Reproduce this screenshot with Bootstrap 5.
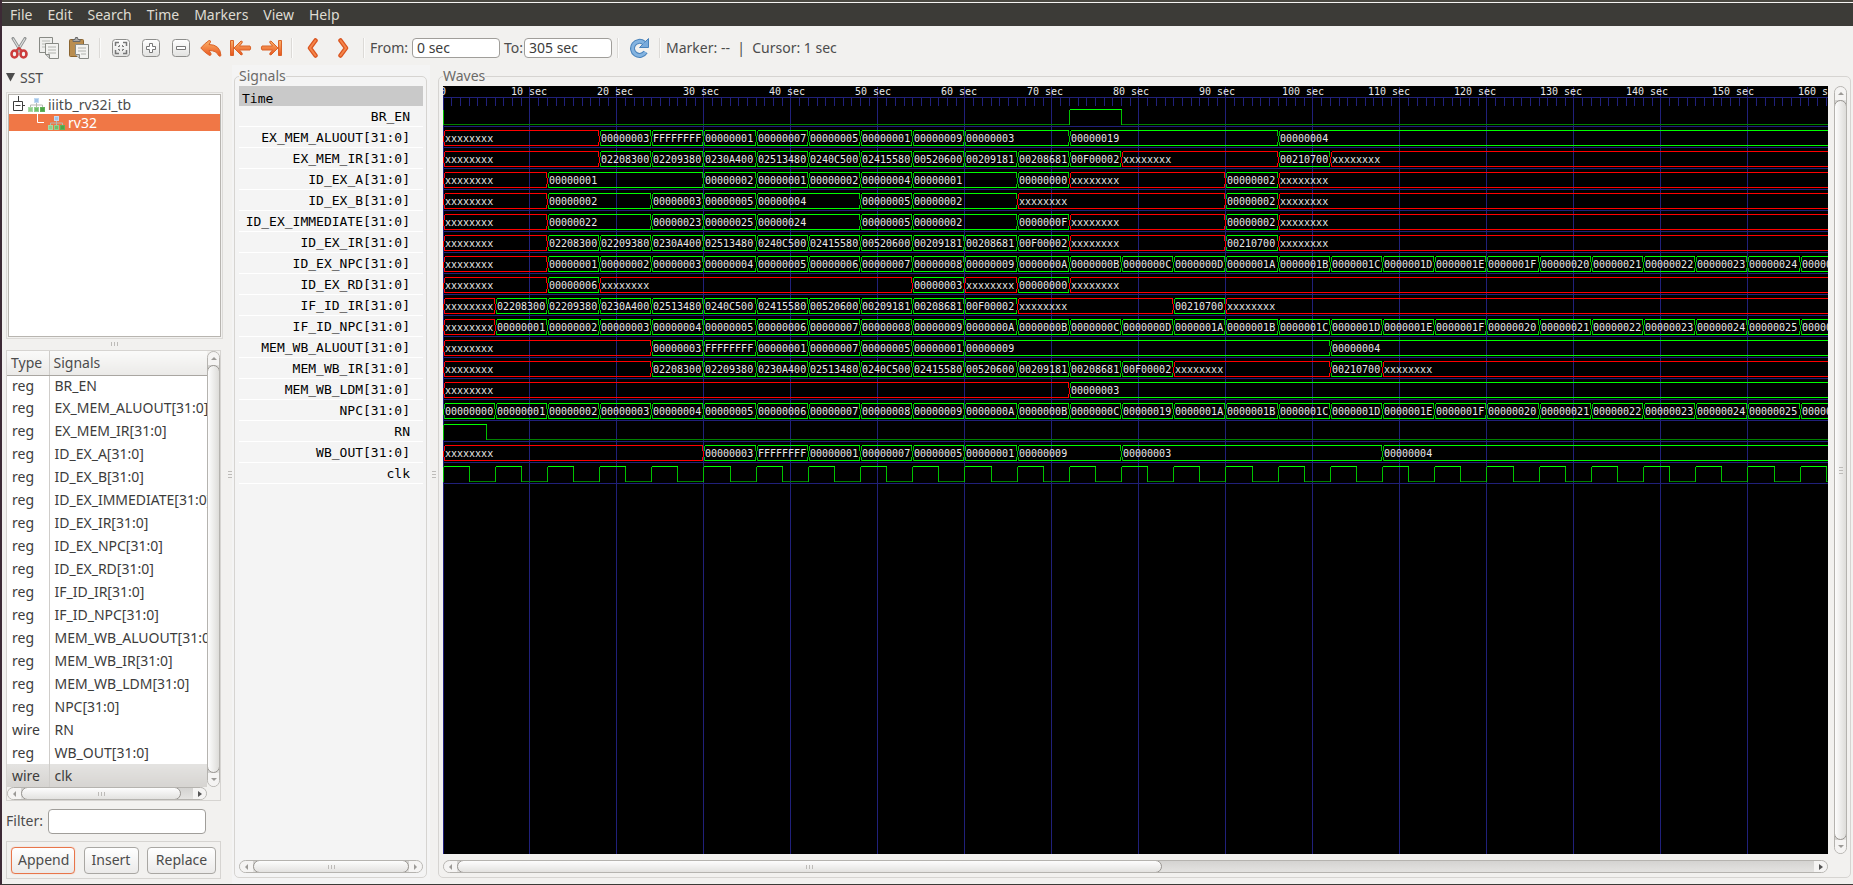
<!DOCTYPE html>
<html lang="en">
<head>
<meta charset="utf-8">
<meta name="viewport" content="width=device-width, initial-scale=1">
<title>GTKWave</title>
<link href="https://cdn.jsdelivr.net/npm/bootstrap@5.3.0/dist/css/bootstrap.min.css" rel="stylesheet">
<style>
:root{--panel:#f2f1ef;--edge:#d6d4d1;--ink:#4c4c4c}
body{font-family:"Noto Sans",sans-serif;font-size:14px;line-height:20px;color:var(--ink);background:var(--panel);border-left:2px solid #3d2a36;border-bottom:1px solid #3c3b37;overflow:hidden}
.titlestrip{height:3px;background:#4b4942;border-bottom:1px solid #f5f4f2}
.menubar{height:23px;background:#3c3b37;padding-left:1px;gap:1px}
.menubar a{color:#dfdbd2;text-decoration:none;padding:0 7px;line-height:24px}
.toolbar{height:39px;padding:5px 0 0 2px}
.tool{width:30px;height:30px;border:0;background:none;padding:0;display:flex;align-items:center;justify-content:center}
.tsep{width:12px;height:20px;display:flex;justify-content:center}
.tsep::before{content:"";width:2px;background:#dcdad7;border-right:1px solid #fbfbfa}
.entry{border:1px solid #a09e9a;border-radius:4px;background:#fff;color:#3c3c3c;padding:0 4px;height:20px;width:88px;outline:0}
.leftpane{width:226px;padding:0 6px 5px 4px}
.sst{height:26px;padding-bottom:1px}
.tree{height:243px;background:#fff;border:1px solid #b8b5b0;outline:1px solid #dddbd8;outline-offset:1px;margin:3px 1px 1px 2px}
.tree .node{height:19px;line-height:19px;padding-left:3px;gap:3px}
.tree .node.sel{background:#f07746;color:#fff;height:17px;line-height:17px}
.grip{display:flex;gap:2px;justify-content:center;align-items:center}
.grip i{width:1px;height:4px;background:#bdbbb8}
.grip.vert{flex-direction:column}
.grip.vert i{width:4px;height:1px}
.siglist{height:451px;border:1px solid var(--edge);margin-right:1px;overflow:hidden}
.siglist table{width:100%;table-layout:fixed;border-collapse:collapse;background:#fff;color:#3c3c3c}
.siglist td,.siglist th{height:23px;padding:0 0 0 5px;line-height:20px;white-space:nowrap;overflow:hidden;font-weight:400}
.siglist th{height:24px;background:linear-gradient(#fafaf9,#ebeae8);border-bottom:1px solid #a9a6a1;color:var(--ink);padding-left:4px}
.siglist th:first-child,.siglist td:first-child{width:42px;border-right:1px solid #cfcdca}
.siglist tbody tr:first-child td{height:21px;line-height:19px}
.siglist tr.cur td{background:linear-gradient(#e4e3e1,#d6d4d1)}
.bar{display:flex;background:linear-gradient(#d4d3d1,#e4e3e1);border:1px solid #b5b3af;border-radius:7px;overflow:hidden;flex:none}
.bar.h{height:13px;width:100%}
.bar.v{width:13px;flex-direction:column;background:linear-gradient(90deg,#d4d3d1,#e4e3e1)}
.bar button{border:0;padding:0;background:#f5f4f3;width:13px;height:11px;flex:none;display:flex;align-items:center;justify-content:center}
.bar.v button{width:11px;height:13px}
.bar button svg{fill:#9c9a97}
.bar .thumb{border:1px solid #989591;border-radius:7px;margin:-1px 0;background:linear-gradient(#fdfdfd,#e3e2e0)}
.bar.v .thumb{margin:0 -1px;background:linear-gradient(90deg,#fdfdfd,#dddcd9)}
.filter{height:40px}
.filter .entry{width:158px;height:25px}
.actions{border:1px solid var(--edge);height:38px;padding:0 4px;margin-right:1px}
.actions button{height:27px;border:1px solid #a9a7a3;border-radius:4px;background:linear-gradient(#fff,#ebeae9);color:var(--ink);padding:0 6px}
.actions button.def{border-color:#e8754a;box-shadow:0 0 1px #f19a78}
.actions .w1{width:64px}.actions .w2{width:55px}.actions .w3{width:69px}
.sigpane{width:198px;background:#f4f4f4;padding:11px 3px 6px 2px}
.wavepane{padding:11px 2px 6px 0}
.group{border:1px solid var(--edge);border-radius:5px;padding:0 3px 4px 4px}
.group h2{font-size:14px;line-height:21px;height:21px;margin:-12px 0 0;align-self:flex-start;color:#6b6a68;font-weight:400}
.sigpane h2{background:#f4f4f4}.wavepane h2{background:var(--panel)}
.names{font:13px/19px "DejaVu Sans Mono",monospace;color:#000;margin:0}
.names li{height:21px;padding:1px 13px 0 0;text-align:right;border-bottom:1px solid #fff;white-space:nowrap}
.names li:first-child{height:20px;background:#c9c9c9;text-align:left;padding:3px 0 0 3px;border:0}
.canvas{background:#000;flex:1 1 0;min-width:0;display:block;font:10px "DejaVu Sans Mono",monospace}
.canvas text{fill:#e9e9e9;white-space:pre}
.canvas path{fill:none;stroke-width:1;shape-rendering:crispEdges}
</style>
<script src="https://cdn.jsdelivr.net/npm/bootstrap@5.3.0/dist/js/bootstrap.bundle.min.js"></script>
</head>
<body class="vh-100 d-flex flex-column">
<svg width="0" height="0" class="position-absolute">
  <defs>
    <linearGradient id="og" x1="0" y1="0" x2="0" y2="1"><stop offset="0" stop-color="#fbb36a"/><stop offset="1" stop-color="#e9531d"/></linearGradient>
    <linearGradient id="bg" x1="0" y1="0" x2="0" y2="1"><stop offset="0" stop-color="#fff"/><stop offset="1" stop-color="#e2e2e0"/></linearGradient>
    <symbol id="net" viewBox="0 0 17 14">
      <path d="M8.500 4v3M2.500 9V7h12v2M8.500 7v2" fill="none" stroke="#b5b8b4"/>
      <rect x="6.500" y=".5" width="4" height="4" fill="#9fc4ea" stroke="#c3daf2"/>
      <rect x=".5" y="9.500" width="4" height="4" fill="#8fd08a" stroke="#a9d9a5"/>
      <rect x="6.500" y="9.500" width="4" height="4" fill="#6fbf6a" stroke="#93cf8f"/>
      <rect x="12.500" y="9.500" width="4" height="4" fill="#4ea548" stroke="#5fb159"/>
    </symbol>
  </defs>
</svg>

<div class="titlestrip flex-shrink-0"></div>
<nav class="menubar d-flex flex-shrink-0" aria-label="Main menu">
  <a href="#">File</a><a href="#">Edit</a><a href="#">Search</a><a href="#">Time</a><a href="#">Markers</a><a href="#">View</a><a href="#">Help</a>
</nav>

<div class="toolbar d-flex align-items-center flex-shrink-0">
  <button class="tool" aria-label="Cut"><svg width="18" height="22"><path d="M3 1.500l8 13M15 1.500l-8 13" stroke="#8e9090" stroke-width="3" stroke-linecap="round"/><path d="M3 1.500l8 13M15 1.500l-8 13" stroke="#dfe1e0" stroke-width="1.200"/><ellipse cx="4.500" cy="17" rx="3" ry="3.500" fill="none" stroke="#cc3b3b" stroke-width="2.600"/><ellipse cx="13.500" cy="17" rx="3" ry="3.500" fill="none" stroke="#cc3b3b" stroke-width="2.600"/><path d="M6 14l3-3 3 3" fill="none" stroke="#cc3b3b" stroke-width="2"/></svg></button>
  <button class="tool" aria-label="Copy"><svg width="20" height="22"><path d="M.5.500h13v15H.5z" fill="#eeeeec" stroke="#888a85"/><path d="M3 4h8M3 7h8M3 10h5" stroke="#b9bbb6"/><path d="M6.500 6.500h13v15h-9l-4-4z" fill="#f3f3f1" stroke="#888a85"/><path d="M9 10h8M9 13h8M9 16h8" stroke="#b0b2ad"/><path d="M6.500 17.500h4v4" fill="#ccc" stroke="#888a85"/></svg></button>
  <button class="tool" aria-label="Paste"><svg width="20" height="22"><rect x=".5" y="2.500" width="14" height="17" rx="1" fill="#b98d4f" stroke="#8b6530"/><path d="M4 4.500V2.500h2L6.500.500h2l.5 2h2v2z" fill="#aaa" stroke="#666"/><path d="M6.500 7.500h13v14h-9l-4-4z" fill="#f3f3f1" stroke="#888a85"/><path d="M9 11h8M9 14h8M12 17h5" stroke="#b0b2ad"/><path d="M6.500 17.500h4v4" fill="#ccc" stroke="#888a85"/></svg></button>
  <span class="tsep"></span>
  <button class="tool" aria-label="Zoom fit"><svg width="18" height="18"><rect x=".5" y=".5" width="17" height="17" rx="3" fill="url(#bg)" stroke="#8e8e8c"/><path d="M7 3.500H3.500V7M11 3.500h3.500V7M7 14.500H3.500V11M11 14.500h3.500V11" fill="none" stroke="#777" stroke-width="1.500"/><path d="M7.500 6v1.500H6M10.500 6v1.500H12M7.500 12v-1.500H6M10.500 12v-1.500H12" fill="none" stroke="#777"/></svg></button>
  <button class="tool" aria-label="Zoom in"><svg width="18" height="18"><rect x=".5" y=".5" width="17" height="17" rx="3" fill="url(#bg)" stroke="#8e8e8c"/><path d="M7.500 4.500h3v3h3v3h-3v3h-3v-3h-3v-3h3z" fill="#fff" stroke="#777"/></svg></button>
  <button class="tool" aria-label="Zoom out"><svg width="18" height="18"><rect x=".5" y=".5" width="17" height="17" rx="3" fill="url(#bg)" stroke="#8e8e8c"/><path d="M4.500 7.500h9v3h-9z" fill="#fff" stroke="#777"/></svg></button>
  <button class="tool" aria-label="Undo zoom"><svg width="22" height="18"><path d="M9 1.500Q11 1.500 10.500 3L9 5.500q11 0 12 11-1 1.500-2.500 0-2-5-9.500-5l2 3q.5 2-1.500 2Q4 13 .800 9 4 5 9 1.500z" fill="url(#og)" stroke="#d9642a"/></svg></button>
  <button class="tool" aria-label="To start"><svg width="22" height="18"><path d="M.5 1.500h3v15h-3zM11 2q2 0 1 2L9.500 7H20q1.500 2 0 4H9.500l2.500 3q1 2-1 2L4 9z" fill="url(#og)" stroke="#d9642a"/></svg></button>
  <button class="tool" aria-label="To end"><svg width="22" height="18"><path d="M18.500 1.500h3v15h-3zM11 2q-2 0-1 2l2.500 3H2Q.500 9 2 11h10.500L10 14q-1 2 1 2l7-7z" fill="url(#og)" stroke="#d9642a"/></svg></button>
  <span class="tsep"></span>
  <button class="tool" aria-label="Previous edge"><svg width="12" height="20"><path d="M8.500 2.500L3 10l5.500 7.500" fill="none" stroke="#d9541f" stroke-width="4.500" stroke-linecap="round" stroke-linejoin="round"/><path d="M8.500 2.500L3 10l5.500 7.500" fill="none" stroke="#f5854a" stroke-width="2" stroke-linecap="round"/></svg></button>
  <button class="tool" aria-label="Next edge"><svg width="12" height="20"><path d="M3.500 2.500L9 10l-5.500 7.500" fill="none" stroke="#d9541f" stroke-width="4.500" stroke-linecap="round" stroke-linejoin="round"/><path d="M3.500 2.500L9 10l-5.500 7.500" fill="none" stroke="#f5854a" stroke-width="2" stroke-linecap="round"/></svg></button>
  <span class="tsep"></span>
  <label for="from" style="width:42px">From:</label><input id="from" class="entry" value="0 sec">
  <label for="to" class="ms-1" style="width:20px">To:</label><input id="to" class="entry" value="305 sec">
  <span class="tsep"></span>
  <button class="tool" aria-label="Reload"><svg width="20" height="20"><path d="M15 5a7 7 0 1 0 1.500 9" fill="none" stroke="#4a83bb" stroke-width="5"/><path d="M19.500.500v9h-9z" fill="#78aadb" stroke="#4a83bb"/><path d="M15 5a7 7 0 1 0 1.500 9" fill="none" stroke="#83b3e0" stroke-width="3"/></svg></button>
  <span class="tsep"></span>
  <span style="white-space:pre">Marker: --  |  Cursor: 1 sec</span>
</div>

<main class="d-flex flex-grow-1" style="min-height:0">
  <aside class="leftpane flex-shrink-0 d-flex flex-column">
    <div class="sst d-flex align-items-center"><svg width="10" height="9" class="me-1"><path d="M0 0h9L4.500 8.500z" fill="#4c4c4c"/></svg>SST</div>
    <div class="tree flex-shrink-0">
      <div class="node d-flex align-items-center"><svg width="13" height="19"><path d="M6.500 1v5M1.500 6.500h9v9h-9zM3.500 10.500h5M10.500 10.500H13" fill="none" stroke="#3c3c3c"/></svg><svg width="17" height="14"><use href="#net"/></svg>iiitb_rv32i_tb</div>
      <div class="node sel d-flex align-items-center"><svg width="33" height="17"><path d="M25.500 0v8.500H32" fill="none" stroke="#fff"/></svg><svg width="17" height="14"><use href="#net"/></svg>rv32</div>
    </div>
    <div class="grip flex-shrink-0" style="height:12px"><i></i><i></i><i></i></div>
    <div class="siglist d-flex flex-column flex-shrink-0">
      <div class="d-flex flex-grow-1">
        <div class="flex-grow-1 overflow-hidden">
          <table>
            <thead><tr><th>Type</th><th>Signals</th></tr></thead>
            <tbody id="rows"></tbody>
          </table>
        </div>
        <div class="bar v"><button aria-label="Up"><svg width="6" height="3"><path d="M0 3l3-3 3 3z"/></svg></button><div class="thumb flex-grow-1"></div><button aria-label="Down"><svg width="6" height="3"><path d="M0 0l3 3 3-3z"/></svg></button></div>
      </div>
      <div style="padding-right:13px"><div class="bar h"><button aria-label="Left"><svg width="3" height="6"><path d="M3 0L0 3l3 3z"/></svg></button><div class="thumb grip" style="width:81%"><i></i><i></i><i></i></div><button class="ms-auto" aria-label="Right"><svg width="4" height="6"><path fill="#555" d="M0 0l4 3-4 3z"/></svg></button></div></div>
    </div>
    <div class="filter d-flex align-items-center flex-shrink-0"><label for="filter" style="width:42px">Filter:</label><input id="filter" class="entry"></div>
    <div class="actions d-flex align-items-center justify-content-between flex-shrink-0"><button class="def w1">Append</button><button class="w2">Insert</button><button class="w3">Replace</button></div>
  </aside>
  <div class="grip vert flex-shrink-0" style="width:4px"><i></i><i></i><i></i></div>
  <section class="sigpane flex-shrink-0 d-flex flex-column">
    <div class="group flex-grow-1 d-flex flex-column">
      <h2>Signals</h2>
      <ul class="names list-unstyled flex-grow-1" id="names"><li>Time</li></ul>
      <div class="bar h"><button aria-label="Left"><svg width="3" height="6"><path d="M3 0L0 3l3 3z"/></svg></button><div class="thumb grip flex-grow-1"><i></i><i></i><i></i></div><button aria-label="Right"><svg width="3" height="6"><path d="M0 0l3 3-3 3z"/></svg></button></div>
    </div>
  </section>
  <div class="grip vert flex-shrink-0" style="width:8px"><i></i><i></i><i></i></div>
  <section class="wavepane flex-grow-1 d-flex flex-column" style="min-width:0">
    <div class="group flex-grow-1 d-flex flex-column">
      <h2>Waves</h2>
      <div class="d-flex flex-grow-1" style="gap:6px">
        <svg class="canvas" id="waves" role="img" aria-label="Waveforms"></svg>
        <div class="bar v"><button aria-label="Up"><svg width="6" height="3"><path d="M0 3l3-3 3 3z"/></svg></button><div class="thumb grip vert flex-grow-1"><i></i><i></i><i></i></div><button aria-label="Down"><svg width="6" height="3"><path d="M0 0l3 3 3-3z"/></svg></button></div>
      </div>
      <div style="padding:6px 19px 0 0"><div class="bar h"><button aria-label="Left"><svg width="3" height="6"><path d="M3 0L0 3l3 3z"/></svg></button><div class="thumb grip" style="width:51%"><i></i><i></i><i></i></div><button class="ms-auto" aria-label="Right"><svg width="4" height="6"><path fill="#555" d="M0 0l4 3-4 3z"/></svg></button></div></div>
    </div>
  </section>
</main>

<script>
const X = 'xxxxxxxx';
const instr = ['02208300','02209380','0230A400','02513480','0240C500','02415580','00520600','00209181','00208681','00F00002'];
// "cell:value" pairs; one cell is one clock period of 6 sec
const vals = s => s.split(' ').map(p => { const [k, v] = p.split(':'); return [+k, v === 'x' ? X : v.padStart(8, '0')]; });
const program = (start, again) => [[0, X], ...instr.map((v, i) => [start + i, v]), [start + 10, X], [again, '00210700'], [again + 1, X]];
const count = (start, from, jump, to) => { const r = []; let n = from; for (let k = start; k < 27; k++) { if (k === jump) n = to; r.push([k, n.toString(16).toUpperCase().padStart(8, '0')]); n++; } return r; };
const signals = [
  ['reg', 'BR_EN', 'bit', [[72, 78]]],
  ['reg', 'EX_MEM_ALUOUT[31:0]', 'bus', vals('0:x 3:3 4:FFFFFFFF 5:1 6:7 7:5 8:1 9:9 10:3 12:19 16:4')],
  ['reg', 'EX_MEM_IR[31:0]', 'bus', program(3, 16)],
  ['reg', 'ID_EX_A[31:0]', 'bus', vals('0:x 2:1 5:2 6:1 7:2 8:4 9:1 11:0 12:x 15:2 16:x')],
  ['reg', 'ID_EX_B[31:0]', 'bus', vals('0:x 2:2 4:3 5:5 6:4 8:5 9:2 11:x 15:2 16:x')],
  ['reg', 'ID_EX_IMMEDIATE[31:0]', 'bus', vals('0:x 2:22 4:23 5:25 6:24 8:5 9:2 11:F 12:x 15:2 16:x')],
  ['reg', 'ID_EX_IR[31:0]', 'bus', program(2, 15)],
  ['reg', 'ID_EX_NPC[31:0]', 'bus', [[0, X], ...count(2, 1, 15, 26)]],
  ['reg', 'ID_EX_RD[31:0]', 'bus', vals('0:x 2:6 3:x 9:3 10:x 11:0 12:x')],
  ['reg', 'IF_ID_IR[31:0]', 'bus', program(1, 14)],
  ['reg', 'IF_ID_NPC[31:0]', 'bus', [[0, X], ...count(1, 1, 14, 26)]],
  ['reg', 'MEM_WB_ALUOUT[31:0]', 'bus', vals('0:x 4:3 5:FFFFFFFF 6:1 7:7 8:5 9:1 10:9 17:4')],
  ['reg', 'MEM_WB_IR[31:0]', 'bus', program(4, 17)],
  ['reg', 'MEM_WB_LDM[31:0]', 'bus', vals('0:x 12:3')],
  ['reg', 'NPC[31:0]', 'bus', count(0, 0, 13, 25)],
  ['wire', 'RN', 'bit', [[0, 5]]],
  ['reg', 'WB_OUT[31:0]', 'bus', vals('0:x 5:3 6:FFFFFFFF 7:1 8:7 9:5 10:1 11:9 13:3 18:4')],
  ['wire', 'clk', 'bit', Array.from({length: 27}, (_, i) => [6 * i, 6 * i + 3])]
];
document.getElementById('rows').innerHTML = signals.map((s, i) => `<tr${i === 17 ? ' class="cur"' : ''}><td>${s[0]}</td><td>${s[1]}</td></tr>`).join('');
document.getElementById('names').insertAdjacentHTML('beforeend', signals.map(s => `<li>${s[1]}</li>`).join(''));

const END = 1384, px = t => Math.max(0, Math.round(8.7 * t - 0.55));
let blue = `M0 0V2000M0 11H${END + 1}`, text = '';
for (let t = 1; t < 160; t++) blue += t % 10 ? `M${px(t)} 11V19` : `M${8.7 * t - 1} 0V2000`;
text += '<text x="-3" y="9">0</text>';
for (let n = 1; n <= 16; n++) text += `<text x="${86 * n}" y="9" text-anchor="middle">${10 * n} sec</text>`;
const col = {hi: '', edge: '', lo: '', red: ''};
signals.forEach(([, , kind, data], i) => {
  const top = 23 + 21 * i, bot = top + 15;
  blue += `M0 ${top + 17}H${END + 1}`;
  if (kind === 'bit') {
    let last = 0;
    if (data[0][0]) col.edge += `M0 ${top}V${bot}`;
    data.forEach(([a, b]) => {
      const xa = px(a), xb = px(b);
      col.lo += `M${last} ${bot}H${xa}`;
      col.edge += `M${xa} ${bot}V${top}M${xb} ${top}V${bot}`;
      col.hi += `M${xa} ${top}H${xb}`;
      last = xb;
    });
    if (last < END) col.lo += `M${last} ${bot}H${END + 1}`;
    return;
  }
  data.forEach(([k, v], j) => {
    const next = data[j + 1], a = px(6 * k), b = next ? px(6 * next[0]) : END, bad = v === X;
    const side = (x, out) => `M${x} ${top}V${top + 5}M${x + out} ${top + 5}V${bot - 4}M${x} ${bot - 4}V${bot}`;
    const end = next ? b - 1 : END;
    col[bad ? 'red' : 'hi'] += `M${a + 1} ${top}H${end}M${a + 1} ${bot}H${end}`;
    col[bad ? 'red' : 'edge'] += side(a + 1, -1) + (next ? side(b - 1, 1) : '');
    text += `<text x="${a + 2}" y="${top + 12}">${v}</text>`;
  });
});
document.getElementById('waves').innerHTML =
  `<g transform="translate(.5 .5)"><path stroke="#20207a" d="${blue}"/><path stroke="#008000" d="${col.lo}"/><path stroke="#00c000" d="${col.edge}"/><path stroke="#f00" d="${col.red}"/><path stroke="#0f0" d="${col.hi}"/></g>` + text;
</script>
</body>
</html>
